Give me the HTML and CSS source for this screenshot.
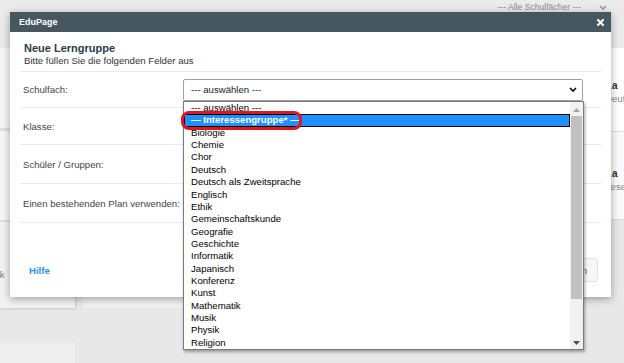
FILE: index.html
```html
<!DOCTYPE html>
<html lang="de">
<head>
  <meta charset="UTF-8">
  <meta name="viewport" content="width=device-width, initial-scale=1.0">
  <title>Neue Lerngruppe</title>
  <link rel="stylesheet" href="styles.css">
</head>
<body>

<div class="page">
  <header class="topbar">
    <span class="filter">--- Alle Schulfächer ---</span>
    <svg class="filter-caret" width="8" height="5" viewBox="0 0 8 5"><polyline points="1,1 4,4 7,1" fill="none" stroke="#8c8c8c" stroke-width="1.3"/></svg>
  </header>

  <div class="main">
    <div class="col col-left">
      <div class="panel lp1"></div>
      <div class="panel lp2"></div>
      <div class="panel lp3"><span class="muted">Statistik</span></div>
      <div class="panel lp4"></div>
    </div>
    <div class="col col-mid">
      <div class="panel mp1"></div>
      <div class="panel mp2"></div>
      <div class="panel mp3"></div>
    </div>
    <div class="col col-right">
      <div class="group-card">
        <b>Lerngruppe 1a</b>
        <span>Kurs: Fach Deutsch</span>
      </div>
      <div class="group-card alt">
        <b>Lerngruppe 1a</b>
        <span>Kurs: Wahl Lesen</span>
      </div>
    </div>
  </div>
</div>

<!-- dialog -->
<div class="modal">
  <div class="modal-head">
    <span>EduPage</span>
    <svg width="7" height="7" viewBox="0 0 7 7"><path d="M1 1 L6 6 M6 1 L1 6" stroke="#fff" stroke-width="2" stroke-linecap="round"/></svg>
  </div>
  <div class="modal-body">
    <h2 class="title">Neue Lerngruppe</h2>
    <p class="subtitle">Bitte füllen Sie die folgenden Felder aus</p>

    <div class="form">
      <div class="row r1">
        <label>Schulfach:</label>
        <div class="select">
          <span>--- auswählen ---</span>
          <svg width="8" height="5" viewBox="0 0 8 5"><polyline points="1,1 4,4 7,1" fill="none" stroke="#000" stroke-width="1.6"/></svg>
        </div>
      </div>
      <div class="row r2"><label>Klasse:</label></div>
      <div class="row r3"><label>Schüler / Gruppen:</label></div>
      <div class="row r4"><label>Einen bestehenden Plan verwenden:</label></div>
    </div>

    <div class="modal-foot">
      <a class="help">Hilfe</a>
      <button class="btn">Erstellen</button>
    </div>
  </div>
</div>

<!-- open select list -->
<div class="dropdown">
  <ul class="options">
    <li>--- auswählen ---</li>
    <li class="active">— Interessengruppe* —</li>
    <li>Biologie</li>
    <li>Chemie</li>
    <li>Chor</li>
    <li>Deutsch</li>
    <li>Deutsch als Zweitsprache</li>
    <li>Englisch</li>
    <li>Ethik</li>
    <li>Gemeinschaftskunde</li>
    <li>Geografie</li>
    <li>Geschichte</li>
    <li>Informatik</li>
    <li>Japanisch</li>
    <li>Konferenz</li>
    <li>Kunst</li>
    <li>Mathematik</li>
    <li>Musik</li>
    <li>Physik</li>
    <li>Religion</li>
  </ul>
  <div class="scrollbar">
    <svg class="sb-arrow up" width="7" height="4" viewBox="0 0 7 4"><polygon points="0,4 7,4 3.5,0" fill="#a3a3a3"/></svg>
    <div class="thumb"></div>
    <div class="sb-space"></div>
    <svg class="sb-arrow down" width="7" height="4" viewBox="0 0 7 4"><polygon points="0,0 7,0 3.5,4" fill="#505050"/></svg>
  </div>
</div>

<div class="callout"></div>

</body>
</html>
```

FILE: styles.css
```css
body {
  margin: 0;
  width: 624px;
  height: 363px;
  overflow: hidden;
  position: relative;
  font-family: 'Liberation Sans', Arial, sans-serif;
  background-color: #e8e8e8;
}

/* background page */

.topbar {
  height: 48px;
  box-sizing: border-box;
  background-color: #ebebeb;
  display: flex;
  justify-content: flex-end;
  align-items: flex-start;
  gap: 18px;
  padding: 2px 17px 0 0;
  font-size: 8.6px;
  color: #8c8c8c;
}

.filter-caret {
  margin-top: 3px;
}

.main {
  display: grid;
  grid-template-columns: 115px 1fr 84px;
  gap: 8px;
  margin-left: -40px;
}

.col {
  display: flex;
  flex-direction: column;
}

.panel {
  background-color: #f6f6f6;
}

.lp1 {
  height: 80px;
  border-bottom: 3px solid #dedede;
}

.lp2 {
  height: 89px;
  border-bottom: 2px solid #e0e0e0;
}

.lp3 {
  height: 86px;
  background-color: #f2f2f2;
  box-shadow: 1px 1px 2px rgba(0, 0, 0, 0.12);
  padding: 47px 0 0 11px;
  box-sizing: border-box;
  font-size: 9.6px;
}

.lp4 {
  height: 20px;
  margin-top: 35px;
  background-color: #eeeeee;
}

.muted {
  color: #777;
}

.mp1 {
  height: 80px;
  border-bottom: 3px solid #dedede;
}

.mp2 {
  height: 89px;
  border-bottom: 2px solid #e0e0e0;
}

.mp3 {
  height: 86px;
  background-color: #f2f2f2;
}

.group-card {
  height: 84px;
  box-sizing: border-box;
  background-color: #fff;
  border-bottom: 1px solid #dcdcdc;
  padding: 32px 0 0 8px;
  display: flex;
  flex-direction: column;
  gap: 2px;
  white-space: nowrap;
  overflow: hidden;
}

.group-card b {
  font-size: 10px;
  color: #333;
}

.group-card span {
  margin-left: 8px;
  font-size: 9.6px;
  color: #888;
}

.group-card.alt {
  height: 88px;
  background-color: #fafafa;
  padding-top: 36px;
}

/* dialog */

.modal {
  position: absolute;
  left: 10px;
  top: 12px;
  width: 601px;
  height: 285px;
  background-color: #fff;
  box-shadow: 0 2px 8px rgba(0, 0, 0, 0.35);
}

.modal-head {
  height: 20px;
  background-color: #47575f;
  color: #fff;
  display: flex;
  align-items: center;
  justify-content: space-between;
  padding: 0 7px 0 9px;
  font-size: 9px;
  font-weight: bold;
}

.modal-body {
  padding: 9px 10px 0;
}

.title {
  margin: 0;
  padding-left: 4px;
  font-size: 11px;
  line-height: 14px;
  font-weight: bold;
  color: #2b3b4b;
}

.subtitle {
  margin: 0 0 4px;
  padding-left: 4px;
  font-size: 9.6px;
  line-height: 12px;
  color: #333;
}

.form {
  border-top: 1px solid #e9e9e9;
}

.row {
  display: grid;
  grid-template-columns: 163px 400px;
  align-items: center;
  box-sizing: border-box;
  border-bottom: 1px solid #e9e9e9;
}

.r1 { height: 36px; }
.r2 { height: 37px; }
.r3 { height: 39px; }
.r4 { height: 39px; }

label {
  padding-left: 3px;
  font-size: 9.6px;
  color: #444;
}

.select {
  height: 22px;
  box-sizing: border-box;
  border: 1px solid #a0a0a0;
  border-radius: 2px;
  display: flex;
  align-items: center;
  justify-content: space-between;
  padding: 0 5px 0 7px;
  font-size: 9.6px;
  color: #222;
}

.modal-foot {
  margin-top: 35px;
  height: 24px;
  display: flex;
  align-items: center;
  justify-content: space-between;
  padding: 0 3px 0 9px;
}

.help {
  color: #2196f3;
  font-weight: bold;
  font-size: 9.6px;
}

.btn {
  height: 24px;
  padding: 0 10px;
  border: 1px solid #e2e2e2;
  border-radius: 3px;
  background-color: #f6f6f6;
  font-family: inherit;
  font-size: 9.6px;
  color: #555;
}

/* open list of the select */

.dropdown {
  position: absolute;
  left: 183px;
  top: 101px;
  width: 401px;
  height: 249px;
  box-sizing: border-box;
  border: 1px solid #7a7a7a;
  background-color: #fff;
  box-shadow: 1px 2px 3px rgba(0, 0, 0, 0.35);
  display: flex;
  overflow: hidden;
}

.options {
  flex: 1;
  list-style: none;
  margin: 0;
  padding: 0;
  font-size: 9.6px;
  color: #000;
}

.options li {
  height: 12.37px;
  line-height: 12.37px;
  padding-left: 7px;
  white-space: nowrap;
}

.options li.active {
  background-color: #1e90ff;
  color: #fff;
  font-weight: bold;
  outline: 1px solid #000;
  outline-offset: -1px;
}

.scrollbar {
  width: 13px;
  background-color: #f1f1f1;
  display: flex;
  flex-direction: column;
  align-items: center;
}

.sb-arrow.up {
  margin: 6px 0 4px;
}

.thumb {
  width: 11px;
  height: 183px;
  background-color: #c1c1c1;
}

.sb-space {
  flex: 1;
}

.sb-arrow.down {
  margin-bottom: 4px;
}

/* red marker drawn round the chosen entry */
.callout {
  position: absolute;
  left: 181px;
  top: 111px;
  width: 121px;
  height: 19px;
  box-sizing: border-box;
  border: 3px solid #e3141e;
  border-radius: 8px;
}
```
